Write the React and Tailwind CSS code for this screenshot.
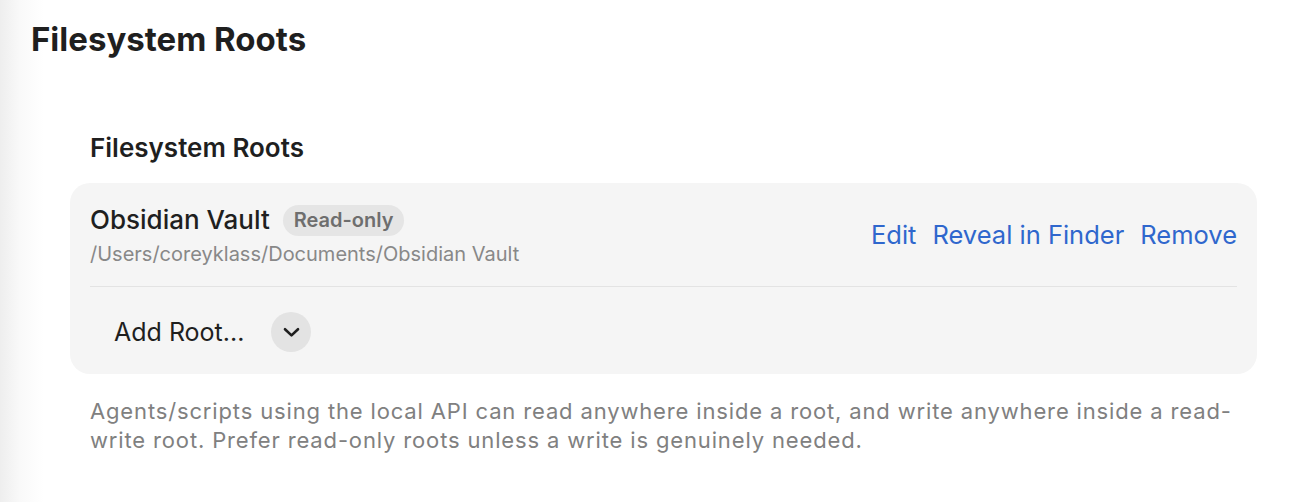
import React from "react"

function Chevron() {
  return (
    <svg width="17" height="11" viewBox="0 0 17 11" fill="none" className="text-[#1f1f1f]">
      <path d="M2 2.2 L8.5 8.4 L15 2.2" stroke="currentColor" strokeWidth="2.6" strokeLinecap="round" strokeLinejoin="round" />
    </svg>
  )
}

export default function App() {
  return (
    <div
      className="min-h-[502px] w-full bg-[linear-gradient(to_right,#eeeeee,#f9f9f9_20px,#ffffff_44px)] text-[#1f1f1f]"
      style={{ fontFamily: "Inter, 'Noto Sans', sans-serif" }}
    >
      {/* Page title */}
      <div className="pl-[31px] pt-[19px]">
        <h1 className="text-[33px] font-bold leading-[41px]">Filesystem Roots</h1>
      </div>

      <div className="pl-[70px] pr-[43px]">
        <h2 className="mt-[72px] pl-[20px] text-[26px] font-semibold leading-[32px]">Filesystem Roots</h2>

        {/* Roots card */}
        <div className="mt-[19px] rounded-[20px] bg-[#f5f5f5] px-[20px]">
          <div className="flex items-center justify-between border-b border-[#e3e3e3] pt-[21px] pb-[20px]">
            <div className="flex flex-col">
              <div className="flex items-center gap-[13px]">
                <span className="text-[26px] font-medium leading-[32px]">Obsidian Vault</span>
                <span className="flex h-[31px] items-center rounded-full bg-[#e5e5e5] px-[11px] text-[20px] font-semibold text-[#6e6e6e]">
                  Read-only
                </span>
              </div>
              <span className="mt-[6px] text-[20px] leading-[24px] text-[#888888]">
                /Users/coreyklass/Documents/Obsidian Vault
              </span>
            </div>
            <div className="flex items-center gap-[16px] text-[25.5px] leading-[32px] text-[#2f67cd]">
              <button>Edit</button>
              <button>Reveal in Finder</button>
              <button>Remove</button>
            </div>
          </div>

          <div className="flex items-center gap-[27px] pl-[24px] pt-[25px] pb-[22px]">
            <span className="text-[25px] leading-[40px]">Add Root...</span>
            <div className="flex h-[40px] w-[40px] items-center justify-center rounded-full bg-[#e3e3e3]">
              <Chevron />
            </div>
          </div>
        </div>

        <p className="mt-[23px] pl-[20px] pr-[12px] text-[22px] leading-[29px] tracking-[0.85px] text-[#808080]">
          Agents/scripts using the local API can read anywhere inside a root, and write anywhere inside a read-write
          root. Prefer read-only roots unless a write is genuinely needed.
        </p>
      </div>
    </div>
  )
}
